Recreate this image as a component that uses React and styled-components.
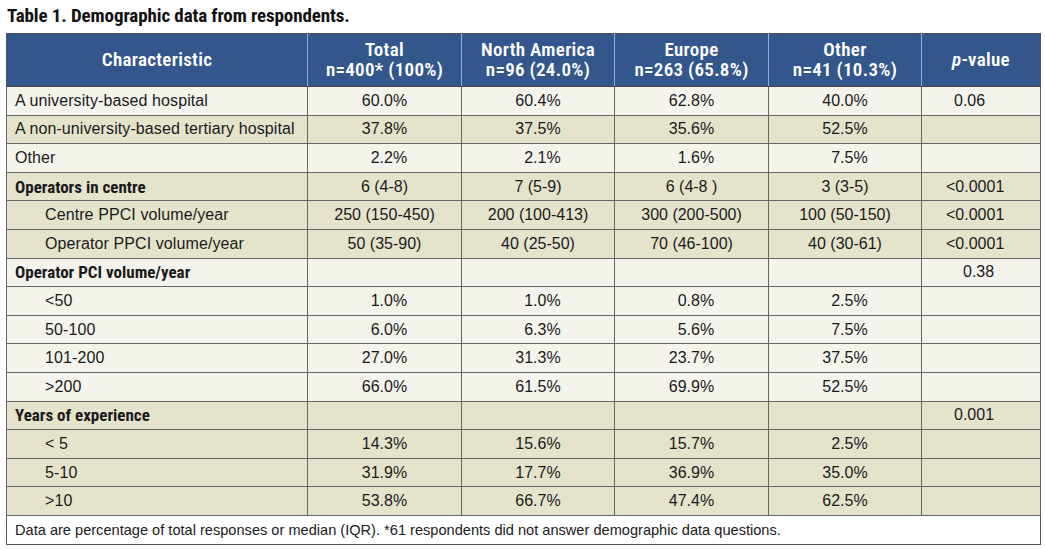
import React from "react";
import styled, { createGlobalStyle } from "styled-components";

const GlobalStyle = createGlobalStyle`
  html, body {
    margin: 0;
    padding: 0;
    background: #ffffff;
  }
`;

const condensed = `Roboto, "Liberation Sans", sans-serif`;
const body = `"Liberation Sans", Arial, sans-serif`;

const Page = styled.div`
  padding: 5px 6px 0 6px;
  font-family: ${body};
  color: #1a1a1a;
`;

const Caption = styled.h1`
  margin: 0 0 7px 1px;
  font-family: ${condensed};
  font-stretch: condensed;
  font-weight: bold;
  font-size: 19px;
  line-height: 21px;
  letter-spacing: -0.1px;
  color: #111;
`;

const Table = styled.table`
  border-collapse: collapse;
  table-layout: fixed;
  width: 1034px;
  border: 1px solid #555;
`;

const HeadCell = styled.th`
  background: #33568c;
  color: #ffffff;
  font-family: ${condensed};
  font-stretch: condensed;
  font-weight: 600;
  font-size: 19px;
  letter-spacing: 0.3px;
  height: 52px;
  padding: 0;
  text-align: center;
  border-left: 1px solid #9aaccb;
  border-bottom: 1px solid #444;
  &:first-child {
    border-left: none;
  }
  i {
    font-style: italic;
  }
`;

const HeadLine = styled.span`
  display: block;
  line-height: 20px;
`;

const Row = styled.tr`
  height: 28.6px;
  background: ${(p) => (p.$shade ? "#e6e3cd" : "#f4f4ec")};
`;

const LabelCell = styled.td`
  padding: 0 0 0 ${(p) => (p.$indent ? 38 : 8)}px;
  font-family: ${(p) => (p.$bold ? condensed : body)};
  font-stretch: ${(p) => (p.$bold ? "condensed" : "normal")};
  font-weight: ${(p) => (p.$bold ? "bold" : "normal")};
  font-size: ${(p) => (p.$bold ? 17 : 16)}px;
  letter-spacing: ${(p) => (p.$bold ? 0 : 0.1)}px;
  border: 1px solid #666;
  white-space: nowrap;
`;

const ValueCell = styled.td`
  padding: 0;
  text-align: center;
  font-size: 16px;
  border: 1px solid #666;
  white-space: pre;
`;

const PCell = styled.td`
  padding: 0 0 0 ${(p) => p.$left}px;
  text-align: left;
  font-size: 16px;
  border: 1px solid #666;
  white-space: pre;
`;

const NoteCell = styled.td`
  background: #ffffff;
  height: 28px;
  padding: 0 0 0 8px;
  font-size: 14.6px;
  border-top: 1px solid #666;
`;

const F = "\u2007";

const pOffsets = { "0.06": 32, "0.001": 32, "<0.0001": 24, "0.38": 41 };

const heads = [
  ["Characteristic"],
  ["Total", "n=400* (100%)"],
  ["North America", "n=96 (24.0%)"],
  ["Europe", "n=263 (65.8%)"],
  ["Other", "n=41 (10.3%)"],
];

const rows = [
  { label: "A university-based hospital", v: ["60.0%", "60.4%", "62.8%", "40.0%"], p: "0.06" },
  { label: "A non-university-based tertiary hospital", shade: true, v: ["37.8%", "37.5%", "35.6%", "52.5%"] },
  { label: "Other", v: [F + "2.2%", F + "2.1%", F + "1.6%", F + "7.5%"] },
  { label: "Operators in centre", bold: true, shade: true, v: ["6 (4-8)", "7 (5-9)", "6 (4-8 )", "3 (3-5)"], p: "<0.0001" },
  { label: "Centre PPCI volume/year", indent: true, shade: true, v: ["250 (150-450)", "200 (100-413)", "300 (200-500)", "100 (50-150)"], p: "<0.0001" },
  { label: "Operator PPCI volume/year", indent: true, shade: true, v: ["50 (35-90)", "40 (25-50)", "70 (46-100)", "40 (30-61)"], p: "<0.0001" },
  { label: "Operator PCI volume/year", bold: true, v: ["", "", "", ""], p: "0.38" },
  { label: "<50", indent: true, v: [F + "1.0%", F + "1.0%", F + "0.8%", F + "2.5%"] },
  { label: "50-100", indent: true, v: [F + "6.0%", F + "6.3%", F + "5.6%", F + "7.5%"] },
  { label: "101-200", indent: true, v: ["27.0%", "31.3%", "23.7%", "37.5%"] },
  { label: ">200", indent: true, v: ["66.0%", "61.5%", "69.9%", "52.5%"] },
  { label: "Years of experience", bold: true, shade: true, v: ["", "", "", ""], p: "0.001" },
  { label: "< 5", indent: true, shade: true, v: ["14.3%", "15.6%", "15.7%", F + "2.5%"] },
  { label: "5-10", indent: true, shade: true, v: ["31.9%", "17.7%", "36.9%", "35.0%"] },
  { label: ">10", indent: true, shade: true, v: ["53.8%", "66.7%", "47.4%", "62.5%"] },
];

export default function App() {
  return (
    <Page>
      <GlobalStyle />
      <Caption>Table 1. Demographic data from respondents.</Caption>
      <Table>
        <colgroup>
          <col style={{ width: 301 }} />
          <col style={{ width: 154 }} />
          <col style={{ width: 153 }} />
          <col style={{ width: 154 }} />
          <col style={{ width: 153 }} />
          <col style={{ width: 119 }} />
        </colgroup>
        <thead>
          <tr>
            {heads.map((h) => (
              <HeadCell key={h[0]}>
                {h.map((line) => (
                  <HeadLine key={line}>{line}</HeadLine>
                ))}
              </HeadCell>
            ))}
            <HeadCell>
              <HeadLine><i>p</i>-value</HeadLine>
            </HeadCell>
          </tr>
        </thead>
        <tbody>
          {rows.map((r) => (
            <Row key={r.label} $shade={r.shade}>
              <LabelCell $bold={r.bold} $indent={r.indent}>{r.label}</LabelCell>
              {r.v.map((v, i) => (
                <ValueCell key={i}>{v}</ValueCell>
              ))}
              <PCell $left={pOffsets[r.p] || 0}>{r.p || ""}</PCell>
            </Row>
          ))}
          <tr>
            <NoteCell colSpan={6}>
              Data are percentage of total responses or median (IQR). *61 respondents did not answer demographic data questions.
            </NoteCell>
          </tr>
        </tbody>
      </Table>
    </Page>
  );
}
